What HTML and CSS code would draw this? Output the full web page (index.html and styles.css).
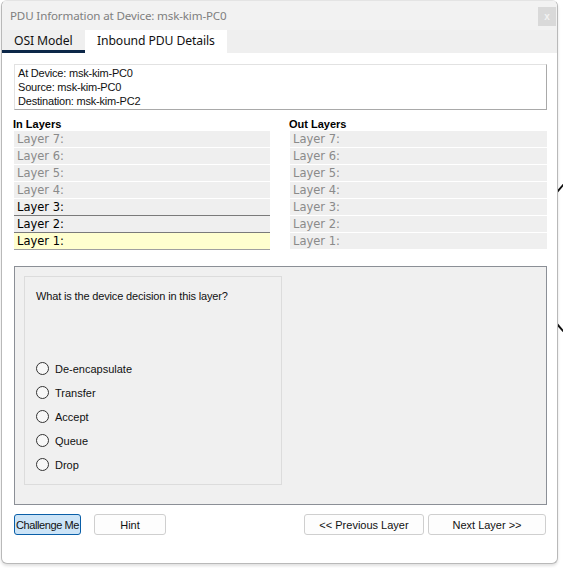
FILE: index.html
```html
<!DOCTYPE html>
<html>
<head>
<meta charset="utf-8">
<link rel="stylesheet" href="styles.css">
</head>
<body>
<svg class="backdrop" width="563" height="568" viewBox="0 0 563 568">
  <circle cx="640" cy="258" r="106" fill="none" stroke="#111" stroke-width="2"/>
</svg>
<div class="window">
  <div class="titlebar">
    <span class="title">PDU Information at Device: msk-kim-PC0</span>
    <span class="close">x</span>
  </div>
  <div class="tabs">
    <div class="tab tab-active">OSI Model</div>
    <div class="tab tab-white">Inbound PDU Details</div>
  </div>
  <div class="content">
    <div class="info">
      <div>At Device: msk-kim-PC0</div>
      <div>Source: msk-kim-PC0</div>
      <div>Destination: msk-kim-PC2</div>
    </div>
    <div class="layers">
      <div class="col">
        <div class="heading">In Layers</div>
        <div class="row dim">Layer 7:</div>
        <div class="row dim">Layer 6:</div>
        <div class="row dim">Layer 5:</div>
        <div class="row dim">Layer 4:</div>
        <div class="row on">Layer 3:</div>
        <div class="row on">Layer 2:</div>
        <div class="row on current">Layer 1:</div>
      </div>
      <div class="col">
        <div class="heading">Out Layers</div>
        <div class="row dim">Layer 7:</div>
        <div class="row dim">Layer 6:</div>
        <div class="row dim">Layer 5:</div>
        <div class="row dim">Layer 4:</div>
        <div class="row dim">Layer 3:</div>
        <div class="row dim">Layer 2:</div>
        <div class="row dim">Layer 1:</div>
      </div>
    </div>
    <div class="panel">
      <div class="question">
        <div class="qtext">What is the device decision in this layer?</div>
        <div class="options">
          <div class="opt"><span class="radio"></span>De-encapsulate</div>
          <div class="opt"><span class="radio"></span>Transfer</div>
          <div class="opt"><span class="radio"></span>Accept</div>
          <div class="opt"><span class="radio"></span>Queue</div>
          <div class="opt"><span class="radio"></span>Drop</div>
        </div>
      </div>
    </div>
    <div class="buttons">
      <div class="group">
        <button class="btn btn-primary w-challenge">Challenge Me</button>
        <button class="btn w-hint">Hint</button>
      </div>
      <div class="group group-right">
        <button class="btn w-prev">&lt;&lt; Previous Layer</button>
        <button class="btn w-next">Next Layer &gt;&gt;</button>
      </div>
    </div>
  </div>
</div>
</body>
</html>
```

FILE: styles.css
```css
html, body {
  margin: 0;
  padding: 0;
}
body {
  width: 563px;
  height: 568px;
  background: #ffffff;
  position: relative;
  overflow: hidden;
  font-family: "Liberation Sans", Arial, sans-serif;
}
.backdrop {
  position: absolute;
  left: 0;
  top: 0;
}
.window {
  position: relative;
  margin-left: 1px;
  width: 555px;
  height: 562px;
  border: 1px solid #b9b9b9;
  border-top-color: #e4e4e4;
  border-radius: 6px;
  background: #ffffff;
  box-shadow: 0 2px 3px rgba(0, 0, 0, 0.12);
  overflow: hidden;
}
.titlebar {
  height: 29px;
  background: #f2f2f2;
  display: flex;
  align-items: center;
  justify-content: space-between;
  padding: 0 1px 0 8px;
}
.title {
  font-family: "Noto Sans", "Open Sans", sans-serif;
  font-size: 11.6px;
  color: #7f7f7f;
  letter-spacing: -0.15px;
}
.close {
  width: 18px;
  height: 19px;
  background: #d9d9d9;
  color: #f2f2f2;
  font-size: 10px;
  font-weight: bold;
  display: flex;
  align-items: center;
  justify-content: center;
  margin-top: 2px;
}
.tabs {
  height: 23px;
  background: #efefef;
  display: flex;
}
.tab {
  font-family: "Noto Sans", "Open Sans", sans-serif;
  font-size: 12.2px;
  color: #111;
  padding-left: 12px;
  line-height: 21px;
  box-sizing: border-box;
  height: 23px;
  letter-spacing: -0.1px;
}
.tab-active {
  width: 83px;
  border-bottom: 3px solid #0c2748;
}
.tab-white {
  width: 142px;
  background: #ffffff;
}
.content {
  padding: 11px 10px 0 12px;
}
.info {
  height: 42px;
  border: 1px solid;
  border-color: #e2e2e2 #a9a9a9 #a9a9a9 #e2e2e2;
  padding: 1px 3px;
  font-size: 11px;
  line-height: 14px;
  color: #111;
  letter-spacing: -0.2px;
  box-sizing: content-box;
  width: 525px;
}
.layers {
  display: grid;
  grid-template-columns: 256px 257px;
  column-gap: 20px;
  margin-top: 8px;
}
.heading {
  font-weight: bold;
  font-size: 11px;
  line-height: 13px;
  margin-left: -1px;
  color: #000;
}
.row {
  height: 16px;
  line-height: 16px;
  background: #efefef;
  margin-bottom: 1px;
  padding-left: 3px;
  font-family: "DejaVu Sans", Verdana, sans-serif;
  font-size: 11.5px;
}
.dim {
  color: #8a8a8a;
}
.on {
  color: #000;
  margin-bottom: 0;
  border-bottom: 1px solid #7a7a7a;
}
.current {
  background: #ffffcf;
  border-bottom-color: #a0a0a0;
}
.panel {
  margin-top: 16px;
  border: 1px solid #8b8f96;
  background: #f0f0f0;
  padding: 9px;
  box-sizing: content-box;
  width: 513px;
  height: 219px;
}
.question {
  height: 207px;
  border: 1px solid #dcdcdc;
  padding: 0 0 0 11px;
  box-sizing: content-box;
  width: 245px;
}
.qtext {
  font-size: 11px;
  color: #111;
  margin-top: 13px;
  line-height: 13px;
  letter-spacing: -0.15px;
}
.options {
  margin-top: 59px;
  display: flex;
  flex-direction: column;
  gap: 11px;
}
.opt {
  display: flex;
  align-items: center;
  gap: 6px;
  font-size: 11px;
  color: #111;
  height: 13px;
}
.radio {
  width: 11px;
  height: 11px;
  border: 1px solid #333;
  border-radius: 50%;
  background: #f8f8f8;
}
.buttons {
  margin-top: 9px;
  display: flex;
  justify-content: space-between;
  padding-right: 1px;
}
.group {
  display: flex;
  gap: 13px;
}
.group-right {
  gap: 4px;
}
.btn {
  height: 21px;
  border: 1px solid #cfcfcf;
  border-radius: 3px;
  background: #fdfdfd;
  font-family: "Liberation Sans", Arial, sans-serif;
  font-size: 11px;
  color: #111;
  padding: 0;
  white-space: nowrap;
}
.btn-primary {
  background: #cce4f7;
  border-color: #0a5fa8;
  letter-spacing: -0.4px;
}
.w-challenge { width: 67px; }
.w-hint { width: 72px; }
.w-prev { width: 120px; }
.w-next { width: 118px; }
```
